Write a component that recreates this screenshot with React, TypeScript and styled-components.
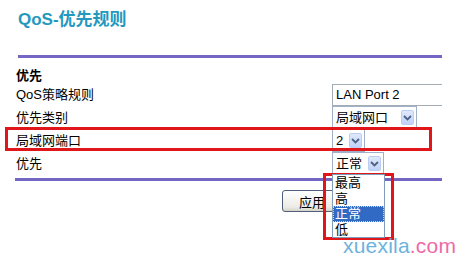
import React from "react";
import styled, {createGlobalStyle} from "styled-components";

const GlobalStyle = createGlobalStyle`
  html, body {
    margin: 0;
    padding: 0;
    background: #ffffff;
  }

  body {
    font-family: "Liberation Sans", "Noto Sans CJK SC", sans-serif;
    font-size: 13px;
    color: #000;
  }
`;

const PRIORITIES = ["最高", "高", "正常", "低"];

const Arrow = () => (
    <ArrowBox>
        <svg width="9" height="6" viewBox="0 0 9 6">
            <path d="M1 1 L4.5 4.5 L8 1" fill="none" stroke="#4d6185" strokeWidth="1.8"/>
        </svg>
    </ArrowBox>
);

const Select: React.FC<{ value: string; width: number }> = ({value, width}) => (
    <SelectBox $width={width}>
        <SelectValue>{value}</SelectValue>
        <Arrow/>
    </SelectBox>
);

const App: React.FC = () => {
    return (
        <>
            <GlobalStyle/>
            <Page>
                <Frame>
                    <Title>QoS-优先规则</Title>
                    <Divider $left={18} $top={26}/>
                    <SectionTitle>优先</SectionTitle>
                    <Form>
                        <Row>
                            <Label>QoS策略规则</Label>
                            <TextInput>LAN Port 2</TextInput>
                        </Row>
                        <Row>
                            <Label>优先类别</Label>
                            <Select value="局域网口" width={85}/>
                        </Row>
                        <Row $marked>
                            <Label>局域网端口</Label>
                            <Select value="2" width={33}/>
                        </Row>
                        <Row>
                            <Label>优先</Label>
                            <Select value="正常" width={52}/>
                        </Row>
                    </Form>
                    <Divider $left={15} $top={3}/>
                    <Actions>
                        <ApplyButton>应用</ApplyButton>
                    </Actions>
                </Frame>

                <ListMark/>
                <OptionList>
                    {PRIORITIES.map((p) => (
                        <Option key={p} $active={p === "正常"}>{p}</Option>
                    ))}
                </OptionList>

                <Watermark>
                    xuexila<Dot>.com</Dot>
                </Watermark>
            </Page>
        </>
    );
};

const Page = styled.div`
  position: relative;
  width: 464px;
  height: 259px;
  overflow: hidden;
  background: #fff;
`;

const Frame = styled.div`
  width: 442px;
  overflow: hidden;
`;

const Title = styled.h1`
  margin: 0;
  padding: 11px 0 0 18px;
  font-family: "Liberation Sans", "Noto Sans CJK SC", sans-serif;
  font-size: 17px;
  line-height: 18px;
  font-weight: bold;
  color: #2598bd;
`;

const Divider = styled.div<{ $left: number; $top: number }>`
  margin-left: ${(p) => p.$left}px;
  margin-top: ${(p) => p.$top}px;
  height: 3px;
  background: #7466c4;
`;

const SectionTitle = styled.div`
  padding: 8px 0 0 16px;
  height: 17px;
  line-height: 17px;
  font-weight: bold;
  font-family: "Noto Sans CJK SC", sans-serif;
  font-size: 13px;
`;

const Form = styled.div`
  display: flex;
  flex-direction: column;
  padding-left: 16px;
`;

const Row = styled.div<{ $marked?: boolean }>`
  position: relative;
  display: grid;
  grid-template-columns: 316px 1fr;
  align-items: center;
  height: 23px;

  ${(p) =>
          p.$marked &&
          `
    &::after {
      content: "";
      position: absolute;
      left: -11px;
      top: -2px;
      width: 427px;
      height: 24px;
      box-sizing: border-box;
      border: 3px solid #e0161b;
      pointer-events: none;
    }
  `}
`;

const Label = styled.span`
  font-family: "Liberation Sans", "Noto Sans CJK SC", sans-serif;
  font-size: 13px;
  line-height: 16px;
`;

const TextInput = styled.div`
  box-sizing: border-box;
  width: 130px;
  height: 22px;
  border: 1px solid #a5acb2;
  border-right-color: #d8dbe0;
  padding-left: 3px;
  display: flex;
  align-items: center;
  font-size: 13px;
`;

const SelectBox = styled.div<{ $width: number }>`
  box-sizing: border-box;
  width: ${(p) => p.$width}px;
  height: 23px;
  border: 1px solid #9fb0c8;
  background: #fff;
  display: flex;
  align-items: center;
  justify-content: space-between;
  padding: 0 2px 0 3px;
`;

const SelectValue = styled.span`
  font-family: "Liberation Sans", "Noto Sans CJK SC", sans-serif;
  font-size: 13px;
  line-height: 16px;
`;

const ArrowBox = styled.span`
  box-sizing: border-box;
  width: 13px;
  height: 15px;
  border: 1px solid #bccdf2;
  border-radius: 2px;
  background: linear-gradient(#dfe8fc, #c1d2f8);
  display: flex;
  align-items: center;
  justify-content: center;
`;

const Actions = styled.div`
  display: flex;
  padding: 9px 0 0 282px;
`;

const ApplyButton = styled.button`
  box-sizing: border-box;
  width: 60px;
  height: 22px;
  border: 1px solid #4f5f7a;
  border-radius: 3px;
  background: linear-gradient(#ffffff, #ecebe6 80%, #d6d3c8);
  font-family: "Noto Sans CJK SC", sans-serif;
  font-size: 13px;
  padding: 0;
  color: #000;
`;

const ListMark = styled.div`
  position: absolute;
  left: 323px;
  top: 173px;
  width: 71px;
  height: 67px;
  box-sizing: border-box;
  border: 3px solid #e0161b;
`;

const OptionList = styled.div`
  position: absolute;
  left: 332px;
  top: 174px;
  width: 53px;
  box-sizing: border-box;
  border: 1px solid #7f9db9;
  background: #fff;
  display: flex;
  flex-direction: column;
`;

const Option = styled.div<{ $active?: boolean }>`
  height: 15.5px;
  line-height: 15.5px;
  padding-left: 2px;
  font-family: "Liberation Sans", "Noto Sans CJK SC", sans-serif;
  font-size: 13px;
  background: ${(p) => (p.$active ? "#316ac5" : "transparent")};
  color: ${(p) => (p.$active ? "#fff" : "#000")};
  outline: ${(p) => (p.$active ? "1px dotted #c9d6ee" : "none")};
  outline-offset: -1px;
`;

const Watermark = styled.div`
  position: absolute;
  left: 343px;
  top: 235px;
  font-family: "Liberation Sans", sans-serif;
  font-size: 21px;
  line-height: 21px;
  color: #6cb3dd;
  letter-spacing: 0.2px;
`;

const Dot = styled.span`
  color: #f06aa6;
`;

export default App;
